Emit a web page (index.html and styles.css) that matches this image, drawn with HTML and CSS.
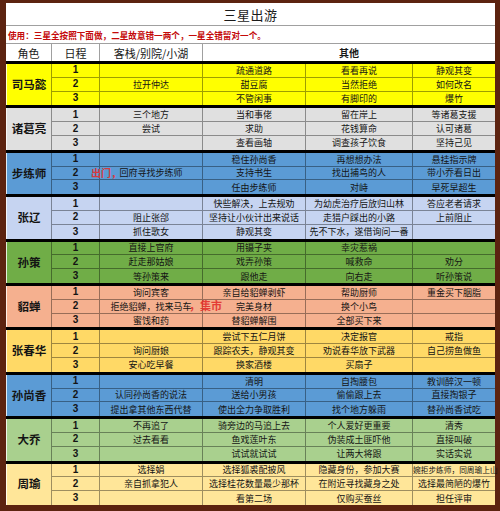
FILE: index.html
```html
<!DOCTYPE html>
<html lang="zh-CN">
<head>
<meta charset="utf-8">
<title>三星出游</title>
<link rel="stylesheet" href="styles.css">
</head>
<body>
<div class="frame">
  <div class="sheet">
    <div class="title">三星出游</div>
    <div class="note">使用：三星全按照下面做，二星故意错一两个，一星全错留对一个。</div>
    <div class="head">
      <div>角色</div><div>日程</div><div>客栈/别院/小湖</div><div class="b">其他</div>
    </div>

    <section class="grp c-yellow">
      <div class="role">司马懿</div>
      <div class="n">1</div><div></div><div>疏通道路</div><div>看看再说</div><div>静观其变</div>
      <div class="n">2</div><div>拉开仲达</div><div>甜豆腐</div><div>当然拒绝</div><div>如何改名</div>
      <div class="n">3</div><div></div><div>不管闲事</div><div>有脚印的</div><div>爆竹</div>
    </section>

    <section class="grp c-gray">
      <div class="role">诸葛亮</div>
      <div class="n">1</div><div>三个地方</div><div>当和事佬</div><div>留在岸上</div><div>等诸葛支援</div>
      <div class="n">2</div><div>尝试</div><div>求助</div><div>花钱算命</div><div>认可诸葛</div>
      <div class="n">3</div><div></div><div>查看画轴</div><div>调查孩子饮食</div><div>坚持己见</div>
    </section>

    <section class="grp c-blue">
      <div class="role">步练师</div>
      <div class="n">1</div><div></div><div>稳住孙尚香</div><div>再想想办法</div><div>悬挂指示牌</div>
      <div class="n">2</div><div class="anchor">回府寻找步练师<span class="mark mark-out">出门，</span></div><div>支持书生</div><div>找出捕鸟的人</div><div>带小乔看日出</div>
      <div class="n">3</div><div></div><div>任由步练师</div><div>对峙</div><div>早死早超生</div>
    </section>

    <section class="grp c-lav">
      <div class="role">张辽</div>
      <div class="n">1</div><div></div><div>快些解决，上去规劝</div><div>为幼虎治疗后放归山林</div><div>答应老者请求</div>
      <div class="n">2</div><div>阻止张郃</div><div>坚持让小伙计出来说话</div><div>走猎户踩出的小路</div><div>上前阻止</div>
      <div class="n">3</div><div>抓住歌女</div><div>静观其变</div><div>先不下水，遂借询问一番</div><div></div>
    </section>

    <section class="grp c-green">
      <div class="role">孙策</div>
      <div class="n">1</div><div>直接上官府</div><div>用镊子夹</div><div>幸灾惹祸</div><div></div>
      <div class="n">2</div><div>赶走那姑娘</div><div>戏弄孙策</div><div>喊救命</div><div>劝分</div>
      <div class="n">3</div><div>等孙策来</div><div>跟他走</div><div>向右走</div><div>听孙策说</div>
    </section>

    <section class="grp c-salmon">
      <div class="role">貂蝉</div>
      <div class="n">1</div><div>询问宾客</div><div>亲自给貂蝉剥虾</div><div>帮助厨师</div><div>重金买下胭脂</div>
      <div class="n">2</div><div class="anchor">拒绝貂蝉，找来马车<span class="mark mark-market">，集市</span></div><div>完美身材</div><div>换个小鸟</div><div></div>
      <div class="n">3</div><div>蜜饯和药</div><div>替貂蝉解围</div><div>全部买下来</div><div></div>
    </section>

    <section class="grp c-gold">
      <div class="role">张春华</div>
      <div class="n">1</div><div></div><div>尝试下五仁月饼</div><div>决定报官</div><div>戒指</div>
      <div class="n">2</div><div>询问厨娘</div><div>跟踪农夫，静观其变</div><div>劝说春华放下武器</div><div>自己捞鱼做鱼</div>
      <div class="n">3</div><div>安心吃早餐</div><div>换家酒楼</div><div>买扇子</div><div></div>
    </section>

    <section class="grp c-blue">
      <div class="role">孙尚香</div>
      <div class="n">1</div><div></div><div>清明</div><div>自掏腰包</div><div>教训醉汉一顿</div>
      <div class="n">2</div><div>认同孙尚香的说法</div><div>送给小男孩</div><div>偷偷跟上去</div><div>直接掏银子</div>
      <div class="n">3</div><div>提出拿其他东西代替</div><div>使出全力争取胜利</div><div>找个地方躲雨</div><div>替孙尚香试吃</div>
    </section>

    <section class="grp c-lgreen">
      <div class="role">大乔</div>
      <div class="n">1</div><div>不再追了</div><div>骑旁边的马追上去</div><div>个人爱好更重要</div><div>清秀</div>
      <div class="n">2</div><div>过去看看</div><div>鱼戏莲叶东</div><div>伪装成土匪吓他</div><div>直接叫破</div>
      <div class="n">3</div><div></div><div>试试就试试</div><div>让两大将跟</div><div>实话实说</div>
    </section>

    <section class="grp c-peach">
      <div class="role">周瑜</div>
      <div class="n">1</div><div>选择娟</div><div>选择狐裘配披风</div><div>隐藏身份，参加大赛</div><div class="spill">婉拒步练师，同周瑜上山</div>
      <div class="n">2</div><div>亲自抓拿犯人</div><div>选择桂花数量最少那杯</div><div>在附近寻找藏身之处</div><div>选择最简陋的爆竹</div>
      <div class="n">3</div><div></div><div>看第二场</div><div>仅购买蚕丝</div><div>担任评审</div>
    </section>
  </div>
</div>
</body>
</html>
```

FILE: styles.css
```css
html, body {
  margin: 0;
  padding: 0;
}

body {
  background: #5c2310;
  font-family: "Noto Sans CJK SC", "Noto Sans", sans-serif;
  color: #141414;
  overflow: hidden;
  width: 500px;
  height: 511px;
}

.frame {
  box-sizing: border-box;
  width: 500px;
  height: 511px;
  padding: 3px 5px 6px 6px;
}

.sheet {
  background: #fff;
  height: 502px;
  display: flex;
  flex-direction: column;
}

.title {
  box-sizing: border-box;
  height: 23px;
  border-bottom: 1px solid #a0a0a0;
  display: flex;
  align-items: center;
  justify-content: center;
  font-size: 13px;
  letter-spacing: 0.5px;
  color: #1a1a1a;
}

.note {
  box-sizing: border-box;
  height: 18px;
  border-bottom: 1px solid #a0a0a0;
  display: flex;
  align-items: center;
  padding-left: 2px;
  font-size: 8.6px;
  font-weight: 700;
  color: #c40a0a;
  white-space: nowrap;
}

.head {
  display: grid;
  grid-template-columns: 46px 48px 103px 292px;
  height: 17px;
}

.head > div {
  display: flex;
  align-items: center;
  justify-content: center;
  border-right: 1px solid #a0a0a0;
  font-size: 11px;
  color: #1a1a1a;
}

.head > div:last-child {
  border-right: none;
}

.head .b {
  font-weight: 700;
  font-size: 10px;
}

.grp {
  box-sizing: border-box;
  height: 44.4px;
  border-top: 3px solid #000;
  display: grid;
  grid-template-columns: 46px 48px 103px 103px 107px 82px;
  grid-template-rows: repeat(3, 1fr);
}

.grp > div {
  display: flex;
  align-items: center;
  justify-content: center;
  white-space: nowrap;
  font-size: 9px;
  line-height: 1;
  border-right: 1px solid rgba(0, 0, 0, 0.38);
  border-bottom: 1px solid rgba(0, 0, 0, 0.38);
  min-width: 0;
}

.grp > div:nth-child(5n+6) {
  border-right: none;
}

.grp > div:nth-child(n+12) {
  border-bottom: none;
}

.grp > .role {
  grid-row: span 3;
  border-bottom: none;
  font-size: 11.5px;
  font-weight: 700;
  border-left: 1px solid rgba(255, 255, 255, 0.8);
}

.grp > .n {
  font-size: 10px;
  font-weight: 700;
  font-family: "Liberation Sans", "Noto Sans CJK SC", sans-serif;
}

.anchor {
  position: relative;
}

.mark {
  position: absolute;
  color: #e3302c;
  font-weight: 700;
  opacity: 0.9;
}

.mark-out {
  left: -9px;
  top: 1px;
  font-size: 10px;
}

.mark-market {
  left: 89px;
  top: 0;
  font-size: 11px;
}

.grp > .spill {
  justify-content: flex-start;
  overflow: visible;
  font-size: 7.7px;
}

.c-yellow { background: #ffff00; }
.c-gray   { background: #e0e0e0; }
.c-blue   { background: #5b9bd5; }
.c-lav    { background: #c6d4f1; }
.c-green  { background: #70ad47; }
.c-salmon { background: #f5b08f; }
.c-gold   { background: #ffd966; }
.c-lgreen { background: #a9d08e; }
.c-peach  { background: #ffe699; }
```
